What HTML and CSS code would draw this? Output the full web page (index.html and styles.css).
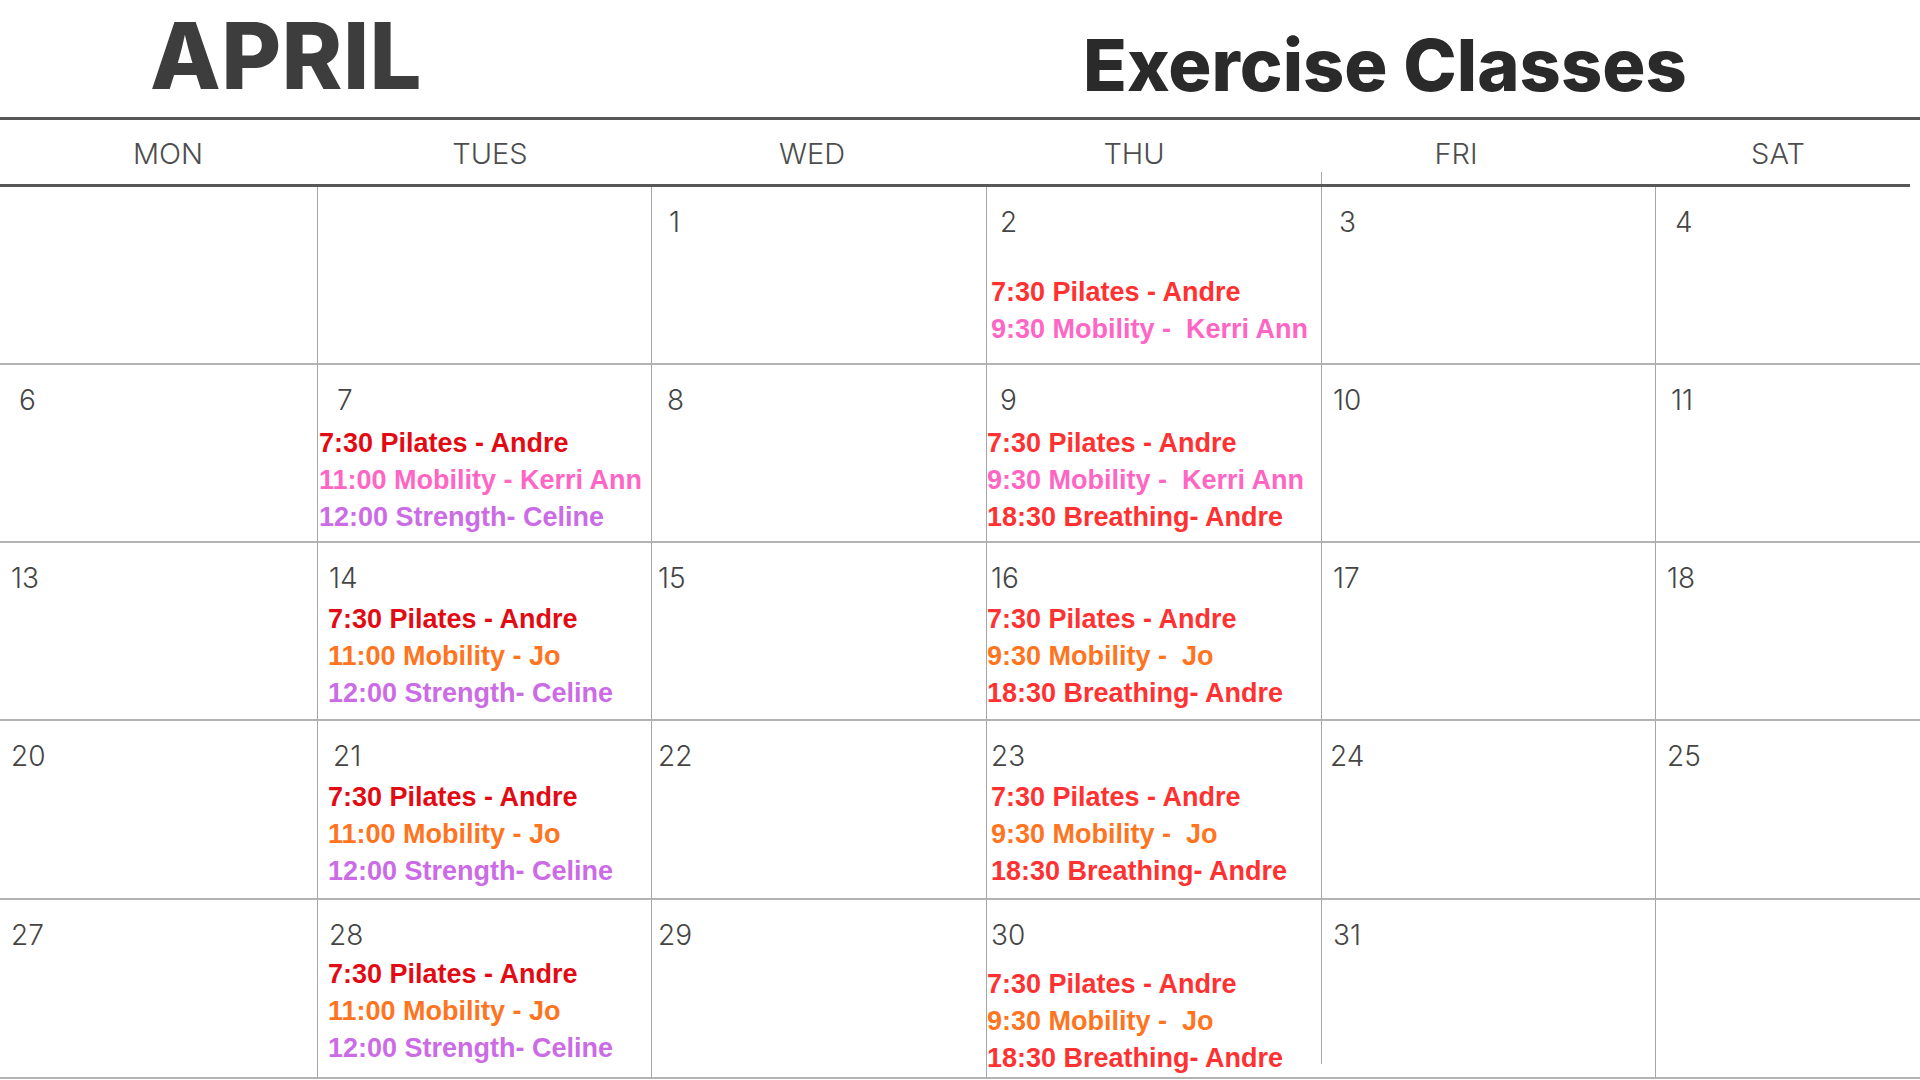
FILE: index.html
```html
<!DOCTYPE html>
<html lang="en">
<head>
<meta charset="utf-8">
<title>April Exercise Classes</title>
<link rel="stylesheet" href="styles.css">
</head>
<body>
<div class="page">
  <header class="title-bar">
    <h1 class="month">APRIL</h1>
    <h2 class="title">Exercise Classes</h2>
  </header>
  <div class="rule rule-top"></div>
  <div class="days">
    <div class="day">MON</div>
    <div class="day">TUES</div>
    <div class="day">WED</div>
    <div class="day">THU</div>
    <div class="day">FRI</div>
    <div class="day">SAT</div>
  </div>
  <div class="rule rule-days"></div>
  <div class="grid">
    <!-- row 1 -->
    <div class="cell"></div>
    <div class="cell"></div>
    <div class="cell"><div class="date dp-15">1</div></div>
    <div class="cell">
      <div class="date dp-11">2</div>
      <div class="events ev-4 gap-xl">
        <div class="ev red">7:30 Pilates - Andre</div>
        <div class="ev pink">9:30 Mobility -  Kerri Ann</div>
      </div>
    </div>
    <div class="cell"><div class="date dp-15">3</div></div>
    <div class="cell"><div class="date dp-17">4</div></div>
    <!-- row 2 -->
    <div class="cell"><div class="date dp-17">6</div></div>
    <div class="cell">
      <div class="date dp-17">7</div>
      <div class="events ev-1 gap-sm">
        <div class="ev dark-red">7:30 Pilates - Andre</div>
        <div class="ev pink">11:00 Mobility - Kerri Ann</div>
        <div class="ev purple">12:00 Strength- Celine</div>
      </div>
    </div>
    <div class="cell"><div class="date dp-13">8</div></div>
    <div class="cell">
      <div class="date dp-11">9</div>
      <div class="events gap-sm">
        <div class="ev red">7:30 Pilates - Andre</div>
        <div class="ev pink">9:30 Mobility -  Kerri Ann</div>
        <div class="ev red">18:30 Breathing- Andre</div>
      </div>
    </div>
    <div class="cell"><div class="date dp-9">10</div></div>
    <div class="cell"><div class="date dp-13">11</div></div>
    <!-- row 3 -->
    <div class="cell"><div class="date dp-9">13</div></div>
    <div class="cell">
      <div class="date dp-9">14</div>
      <div class="events ev-10">
        <div class="ev dark-red">7:30 Pilates - Andre</div>
        <div class="ev orange">11:00 Mobility - Jo</div>
        <div class="ev purple">12:00 Strength- Celine</div>
      </div>
    </div>
    <div class="cell"><div class="date dp-4">15</div></div>
    <div class="cell">
      <div class="date dp-2">16</div>
      <div class="events">
        <div class="ev red">7:30 Pilates - Andre</div>
        <div class="ev orange">9:30 Mobility -  Jo</div>
        <div class="ev red">18:30 Breathing- Andre</div>
      </div>
    </div>
    <div class="cell"><div class="date dp-9">17</div></div>
    <div class="cell"><div class="date dp-9">18</div></div>
    <!-- row 4 -->
    <div class="cell"><div class="date dp-9">20</div></div>
    <div class="cell">
      <div class="date dp-13">21</div>
      <div class="events ev-10">
        <div class="ev dark-red">7:30 Pilates - Andre</div>
        <div class="ev orange">11:00 Mobility - Jo</div>
        <div class="ev purple">12:00 Strength- Celine</div>
      </div>
    </div>
    <div class="cell"><div class="date dp-4">22</div></div>
    <div class="cell">
      <div class="date dp-2">23</div>
      <div class="events ev-4">
        <div class="ev red">7:30 Pilates - Andre</div>
        <div class="ev orange">9:30 Mobility -  Jo</div>
        <div class="ev red">18:30 Breathing- Andre</div>
      </div>
    </div>
    <div class="cell"><div class="date dp-6">24</div></div>
    <div class="cell"><div class="date dp-9">25</div></div>
    <!-- row 5 -->
    <div class="cell"><div class="date dp-9">27</div></div>
    <div class="cell">
      <div class="date dp-9">28</div>
      <div class="events ev-10 gap-xs">
        <div class="ev dark-red">7:30 Pilates - Andre</div>
        <div class="ev orange">11:00 Mobility - Jo</div>
        <div class="ev purple">12:00 Strength- Celine</div>
      </div>
    </div>
    <div class="cell"><div class="date dp-4">29</div></div>
    <div class="cell">
      <div class="date dp-2">30</div>
      <div class="events gap-md">
        <div class="ev red">7:30 Pilates - Andre</div>
        <div class="ev orange">9:30 Mobility -  Jo</div>
        <div class="ev red">18:30 Breathing- Andre</div>
      </div>
    </div>
    <div class="cell short-line"><div class="date dp-9">31</div></div>
    <div class="cell"></div>
  </div>
</div>
</body>
</html>
```
FILE: styles.css
```css
* { box-sizing: border-box; }

html, body {
  margin: 0;
  padding: 0;
  background: #ffffff;
}

.page {
  width: 1920px;
  height: 1080px;
  overflow: hidden;
  background: #ffffff;
  font-family: "Inter", "Noto Sans", sans-serif;
}

/* ---------- title bar ---------- */
.title-bar {
  height: 117px;
  display: flex;
  align-items: flex-start;
  padding-left: 150px;
}

.month {
  margin: 10px 0 0 0;
  flex: 0 0 933px;
  font-size: 92px;
  line-height: 92px;
  font-weight: 800;
  letter-spacing: 0.4px;
  color: #3d3d3d;
}

.title {
  margin: 29px 0 0 0;
  font-size: 72px;
  line-height: 72px;
  font-weight: 800;
  letter-spacing: 0;
  color: #2a2a2a;
}

/* ---------- rules ---------- */
.rule {
  height: 3px;
  background: #575757;
}

.rule-top { width: 1920px; }
.rule-days { width: 1910px; }

/* ---------- day header ---------- */
.days {
  position: relative;
  height: 64px;
  display: flex;
  padding-left: 7px;
  padding-top: 19px;
}

.days::after {
  content: "";
  position: absolute;
  left: 1321px;
  top: 52px;
  width: 1px;
  height: 12px;
  background: #a6a6a6;
}

.day {
  flex: 0 0 322px;
  text-align: center;
  font-size: 29px;
  line-height: 29px;
  font-weight: 300;
  color: #4d4d4d;
}

/* ---------- calendar grid ---------- */
.grid {
  display: grid;
  grid-template-columns: 317px 334px 335px 335px 334px 265px;
  grid-template-rows: 178px 178px 178px 179px 179px;
}

.cell {
  border-bottom: 2px solid #b3b3b3;
  padding-top: 21px;
}

.cell:not(:nth-child(6n+1)) {
  border-left: 1px solid #a6a6a6;
}

.cell.short-line {
  border-left: none;
  padding-left: 1px;
  background: linear-gradient(#a6a6a6, #a6a6a6) no-repeat left top / 1px calc(100% - 13px);
}

.date {
  margin-left: 2px;
  font-size: 28px;
  line-height: 28px;
  font-weight: 300;
  color: #454545;
}

.dp-2 { padding-left: 2px; }
.dp-4 { padding-left: 4px; }
.dp-6 { padding-left: 6px; }
.dp-9 { padding-left: 9px; }
.dp-11 { padding-left: 11px; }
.dp-13 { padding-left: 13px; }
.dp-15 { padding-left: 15px; }
.dp-17 { padding-left: 17px; }

.events {
  margin-top: 9px;
  font-family: "Liberation Sans", Arial, sans-serif;
  font-weight: 700;
  font-size: 27px;
  line-height: 37px;
}

.ev { white-space: pre; }

.events.gap-xs { margin-top: 7px; }
.events.gap-sm { margin-top: 11px; }
.events.gap-md { margin-top: 17px; }
.events.gap-xl { margin-top: 38px; }

.ev-1 { padding-left: 1px; }
.ev-4 { padding-left: 4px; }
.ev-10 { padding-left: 10px; }

.ev.dark-red { color: #e30b13; }
.ev.red { color: #ff3131; }
.ev.pink { color: #ff66c4; }
.ev.purple { color: #cb6ce6; }
.ev.orange { color: #ff751f; }
```
